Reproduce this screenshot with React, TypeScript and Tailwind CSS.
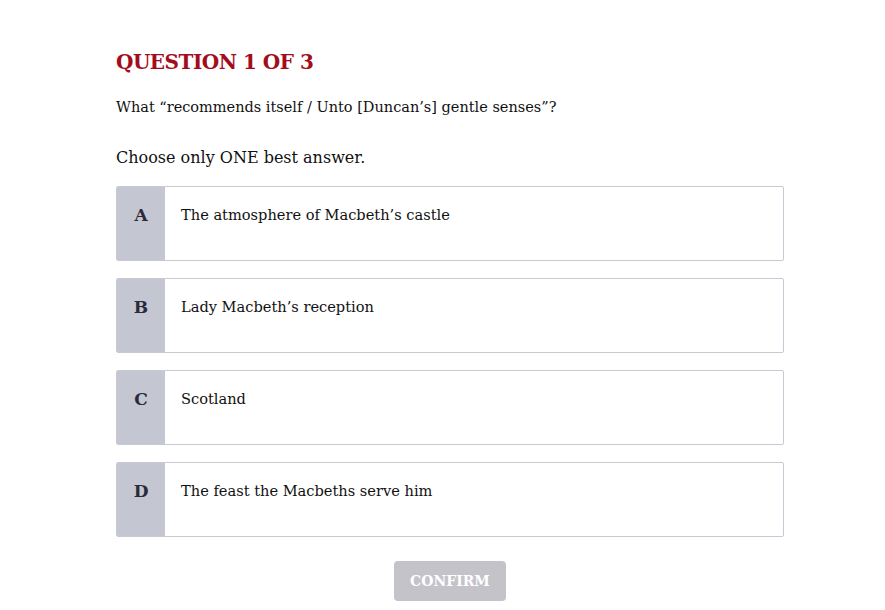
import React from "react";

const options = [
  { letter: "A", text: "The atmosphere of Macbeth\u2019s castle" },
  { letter: "B", text: "Lady Macbeth\u2019s reception" },
  { letter: "C", text: "Scotland" },
  { letter: "D", text: "The feast the Macbeths serve him" },
];

export default function App() {
  return (
    <div
      className="w-[885px] h-[610px] bg-white overflow-hidden"
      style={{ fontFamily: '"DejaVu Serif", "Liberation Serif", serif' }}
    >
      <div className="ml-[116px] w-[668px] pt-[48px] flex flex-col">
        <h1 className="text-[20px] leading-[28px] font-bold tracking-[-0.5px] text-[#a30d1b]">
          QUESTION 1 OF 3
        </h1>
        <p className="mt-[21px] text-[14.5px] leading-[20px] text-[#111]">
          What “recommends itself / Unto [Duncan’s] gentle senses”?
        </p>
        <p className="mt-[29px] text-[16px] leading-[24px] text-[#111]">
          Choose only ONE best answer.
        </p>
        <div className="mt-[16px] flex flex-col gap-[17px]">
          {options.map((o) => (
            <div
              key={o.letter}
              className="flex h-[75px] border border-[#c9c9d3] rounded-[2px] overflow-hidden"
            >
              <div className="w-[48px] bg-[#c4c6d1] flex justify-center pt-[17px] text-[17px] leading-[22px] font-bold text-[#2a2b3a]">
                {o.letter}
              </div>
              <div className="flex-1 pl-[16px] pt-[18px] text-[14.6px] leading-[20px] text-[#111]">
                {o.text}
              </div>
            </div>
          ))}
        </div>
        <div className="mt-[24px] flex justify-center">
          <button className="w-[112px] h-[40px] rounded-[4px] bg-[#c4c3ca] text-white font-bold text-[14px]">
            CONFIRM
          </button>
        </div>
      </div>
    </div>
  );
}
